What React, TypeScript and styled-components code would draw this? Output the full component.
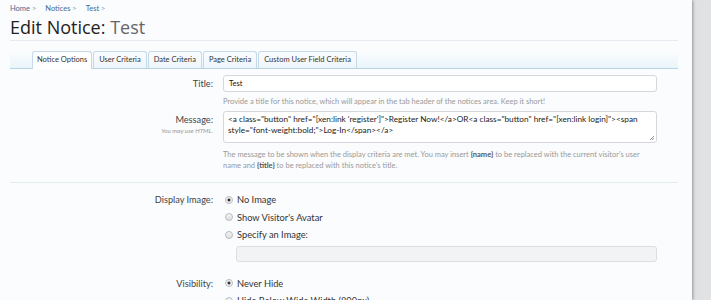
import styled, { createGlobalStyle } from 'styled-components';

const GlobalStyle = createGlobalStyle`
  html, body {
    margin: 0;
    padding: 0;
    background: #d3d6d9;
    font-family: Lato, "Open Sans", sans-serif;
    overflow: hidden;
  }
`;

const Shell = styled.div`
  width: 711px;
  height: 300px;
  display: flex;
  background: linear-gradient(to right, #a9adb1, #cfd2d5 40%, #e0e2e4);
`;

const Page = styled.div`
  width: 692px;
  flex-shrink: 0;
  background: #fbfcfe;
  box-shadow: 1px 0 3px rgba(0, 0, 0, 0.35);
  padding: 4px 14px 0 10px;
  box-sizing: border-box;
`;

const Breadcrumb = styled.div`
  display: flex;
  gap: 9px;
  font-size: 7.5px;
  line-height: 10px;
  color: #45698e;
  height: 10px;

  & span::after {
    content: ' >';
    color: #8a9aab;
  }
`;

const Heading = styled.h1`
  margin: 2px 0 0;
  font-family: "Open Sans", sans-serif;
  font-weight: normal;
  font-size: 18px;
  line-height: 22px;
  color: #222;
  padding-bottom: 2px;
  border-bottom: 1px solid #e4eaef;

  & em {
    font-style: normal;
    color: #666;
  }
`;

const TabStrip = styled.div`
  margin-top: 10px;
  display: flex;
  align-items: flex-end;
  padding-left: 22px;
  height: 17px;
  background: linear-gradient(to bottom, #fbfdfe, #e9f5fa);
  border-bottom: 1px solid #b8d3e3;
`;

const Tab = styled.div<{ $active?: boolean }>`
  line-height: 16px;
  margin-right: 1px;
  padding: 0 ${p => (p.$active ? '4px' : '5px')};
  font-size: 7.5px;
  color: #333;
  border: 1px solid #c5d9e6;
  border-bottom: none;
  border-radius: 3px 3px 0 0;
  background: ${p => (p.$active ? '#fff' : 'linear-gradient(to bottom, #fafcfe, #eef6fa)')};
  margin-bottom: ${p => (p.$active ? '-1px' : '0')};
  height: ${p => (p.$active ? '17px' : '16px')};
`;

const Row = styled.div<{ $top: number }>`
  display: grid;
  grid-template-columns: 203px 434px;
  column-gap: 10px;
  margin-top: ${p => p.$top}px;
`;

const Label = styled.div<{ $line?: number }>`
  text-align: right;
  font-size: 9.2px;
  line-height: ${p => p.$line ?? 17}px;
  color: #444;

  & small {
    display: block;
    font-size: 6.3px;
    line-height: 6px;
    font-style: italic;
    color: #999;
  }
`;

const Field = styled.div`
  display: flex;
  flex-direction: column;
`;

const TextInput = styled.div`
  height: 17px;
  box-sizing: border-box;
  border: 1px solid #d4d8dc;
  border-radius: 3px;
  background: #fff;
  font-size: 7.5px;
  line-height: 15px;
  padding: 0 5px;
  color: #111;
`;

const TextArea = styled.div`
  position: relative;
  height: 32px;
  box-sizing: border-box;
  border: 1px solid #d4d8dc;
  border-radius: 3px;
  background: #fff;
  font-size: 8.25px;
  line-height: 11px;
  padding: 2px 4px;
  color: #222;

  &::after {
    content: '';
    position: absolute;
    right: 2px;
    bottom: 2px;
    width: 4px;
    height: 4px;
    background: linear-gradient(135deg, transparent 45%, #999 45%, #999 55%, transparent 55%, transparent 70%, #999 70%, #999 80%, transparent 80%);
  }
`;

const Hint = styled.p<{ $top: number }>`
  margin: ${p => p.$top}px 0 0;
  font-size: 7.5px;
  line-height: 11px;
  color: #999;

  & b {
    color: #555;
  }
`;

const Separator = styled.hr`
  border: none;
  border-top: 1px solid #e3ecf1;
  margin: 11px 0 0;
`;

const Options = styled.div`
  display: flex;
  flex-direction: column;
  gap: 4.5px;
`;

const Radio = styled.label<{ $checked?: boolean }>`
  display: flex;
  align-items: center;
  gap: 4px;
  font-size: 9.3px;
  color: #333;
  height: 13px;

  &::before {
    content: '';
    width: 6px;
    height: 6px;
    border-radius: 50%;
    border: 1px solid #b8bcc0;
    background: ${p =>
      p.$checked
        ? 'radial-gradient(circle, #333 0, #333 1.2px, #f2f2f2 1.8px)'
        : 'linear-gradient(#f6f6f6, #ddd)'};
    margin-left: 2px;
  }
`;

const SubInput = styled.div`
  margin-left: 13px;
  height: 16px;
  box-sizing: border-box;
  border: 1px solid #dcdfe2;
  border-radius: 3px;
  background: #f2f3f4;
`;

export default function App() {
  return (
    <Shell>
      <GlobalStyle />
      <Page>
        <Breadcrumb>
          <span>Home</span>
          <span>Notices</span>
          <span>Test</span>
        </Breadcrumb>
        <Heading>
          Edit Notice: <em>Test</em>
        </Heading>
        <TabStrip>
          <Tab $active>Notice Options</Tab>
          <Tab>User Criteria</Tab>
          <Tab>Date Criteria</Tab>
          <Tab>Page Criteria</Tab>
          <Tab>Custom User Field Criteria</Tab>
        </TabStrip>

        <Row $top={6}>
          <Label>Title:</Label>
          <Field>
            <TextInput>Test</TextInput>
            <Hint $top={4}>Provide a title for this notice, which will appear in the tab header of the notices area. Keep it short!</Hint>
          </Field>
        </Row>

        <Row $top={4}>
          <Label>
            Message:
            <small>You may use HTML.</small>
          </Label>
          <Field>
            <TextArea>
              &lt;a class="button" href="[xen:link 'register']"&gt;Register Now!&lt;/a&gt;OR&lt;a class="button" href="[xen:link login]"&gt;&lt;span style="font-weight:bold;"&gt;Log-In&lt;/span&gt;&lt;/a&gt;
            </TextArea>
            <Hint $top={6}>
              The message to be shown when the display criteria are met. You may insert <b>{'{name}'}</b> to be replaced with the current visitor's user name and <b>{'{title}'}</b> to be replaced with this notice's title.
            </Hint>
          </Field>
        </Row>

        <Separator />

        <Row $top={10}>
          <Label $line={13}>Display Image:</Label>
          <Options>
            <Radio $checked>No Image</Radio>
            <Radio>Show Visitor's Avatar</Radio>
            <Radio>Specify an Image:</Radio>
            <SubInput />
          </Options>
        </Row>

        <Row $top={15}>
          <Label $line={13}>Visibility:</Label>
          <Options>
            <Radio $checked>Never Hide</Radio>
            <Radio>Hide Below Wide Width (800px)</Radio>
          </Options>
        </Row>
      </Page>
    </Shell>
  );
}
